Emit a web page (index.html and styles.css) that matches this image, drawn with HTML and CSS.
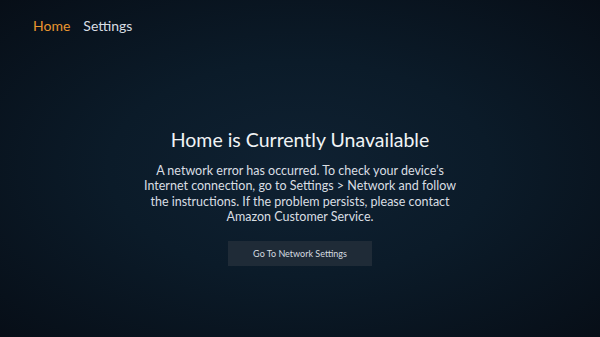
FILE: index.html
```html
<!DOCTYPE html>
<html lang="en">
<head>
    <meta charset="UTF-8">
    <meta name="viewport" content="width=device-width, initial-scale=1.0">
    <title>Home</title>
    <link rel="stylesheet" href="styles.css">
</head>
<body>
    <nav class="topNav">
        <a class="navItem active" href="#">Home</a>
        <a class="navItem" href="#">Settings</a>
    </nav>

    <main class="errorBox">
        <h1>Home is Currently Unavailable</h1>
        <p>A network error has occurred. To check your device’s<br>
        Internet connection, go to Settings &gt; Network and follow<br>
        the instructions. If the problem persists, please contact<br>
        Amazon Customer Service.</p>
        <button class="networkBtn">Go To Network Settings</button>
    </main>
</body>
</html>
```

FILE: styles.css
```css
html, body {
    height: 100%;
}
body {
    margin: 0;
    display: flex;
    flex-direction: column;
    background: radial-gradient(ellipse at 50% 50%, #0f2132 0%, #0b1b29 45%, #070e17 100%);
    font-family: Lato, Arial, sans-serif;
    color: #e9edf0;
    overflow: hidden;
}
.topNav {
    display: flex;
    gap: 13px;
    padding: 17px 0 0 33px;
}
.navItem {
    font-size: 14px;
    color: #d7dde3;
    text-decoration: none;
}
.navItem.active {
    color: #e8962f;
}
.errorBox {
    display: flex;
    flex-direction: column;
    align-items: center;
    text-align: center;
    padding-top: 94px;
}
h1 {
    margin: 0;
    font-size: 19.5px;
    font-weight: 400;
    color: #f0f3f5;
}
p {
    margin: 12px 0 0;
    font-size: 12.5px;
    line-height: 15.4px;
    color: #d9dee3;
}
.networkBtn {
    margin-top: 16px;
    width: 144px;
    height: 25px;
    border: none;
    background-color: #1f2b37;
    color: #d5dbe0;
    font-family: Lato, Arial, sans-serif;
    font-size: 9px;
    cursor: pointer;
}
```
